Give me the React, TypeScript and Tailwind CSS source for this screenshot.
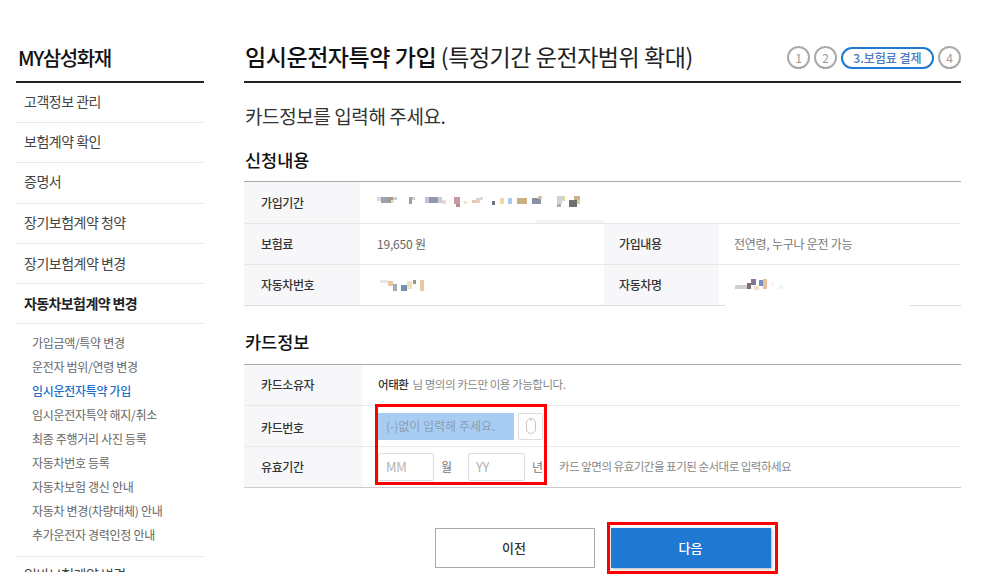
const font = { fontFamily: '"Noto Sans CJK KR", "Noto Sans", sans-serif' };

const mainMenu = ['고객정보 관리', '보험계약 확인', '증명서', '장기보험계약 청약', '장기보험계약 변경'];

const subMenu = [
  '가입금액/특약 변경',
  '운전자 범위/연령 변경',
  '임시운전자특약 가입',
  '임시운전자특약 해지/취소',
  '최종 주행거리 사진 등록',
  '자동차번호 등록',
  '자동차보험 갱신 안내',
  '자동차 변경(차량대체) 안내',
  '추가운전자 경력인정 안내',
];

function Sidebar() {
  return (
    <aside className="w-[188px] h-[572px] overflow-hidden shrink-0">
      <h2 className="h-[83px] pl-[2px] pt-[43px] border-b-2 border-[#222] text-[20px] leading-[30px] font-medium text-[#111] tracking-[-1.4px]">
        MY삼성화재
      </h2>
      <ul>
        {mainMenu.map((item, i) => (
          <li
            key={item}
            className={
              i === 4
                ? 'h-[40.2px] pl-2 border-b border-[#e8e8e8] text-[14px] leading-[39px] tracking-[-0.5px] text-[#444]'
                : 'h-[40.2px] pl-2 border-b border-[#e8e8e8] text-[14px] leading-[37px] tracking-[-0.5px] text-[#444]'
            }
          >
            {item}
          </li>
        ))}
        <li className="h-[40px] pl-2 border-b border-[#e8e8e8] text-[14px] leading-[39px] tracking-[-0.6px] font-bold text-[#222]">
          자동차보험계약 변경
        </li>
      </ul>
      <ul className="pt-[7px] pb-[9px] pl-4 border-b border-[#e8e8e8]">
        {subMenu.map((item, i) => (
          <li
            key={item}
            className={
              i === 2
                ? 'h-6 text-[12px] leading-6 tracking-[-0.3px] font-medium text-[#1f6fc9]'
                : 'h-6 text-[12px] leading-6 tracking-[-0.3px] text-[#666]'
            }
          >
            {item}
          </li>
        ))}
      </ul>
      <div className="pl-2 pt-[7px] text-[14px] leading-5 tracking-[-0.5px] text-[#444]">일반보험계약 변경</div>
    </aside>
  );
}

function Steps() {
  const circle =
    'w-[23px] h-[23px] rounded-full border-2 border-[#aaa] flex items-center justify-center text-[12px] text-[#999]';
  return (
    <div className="flex items-center gap-1">
      <span className={circle}>1</span>
      <span className={circle}>2</span>
      <span className="w-[93px] h-[22px] rounded-full border-2 border-[#1f78d1] flex items-center justify-center text-[12px] font-medium text-[#4a78c0]">
        3.보험료 결제
      </span>
      <span className={circle}>4</span>
    </div>
  );
}

type Block = [number, number, number, number, string];

// 가려진 개인정보 (모자이크)
function Mosaic({ blocks, w }: { blocks: Block[]; w: number }) {
  return (
    <svg width={w} height={13} className="block">
      {blocks.map(([x, y, bw, bh, c], i) => (
        <rect key={i} x={x} y={y} width={bw} height={bh} fill={c} />
      ))}
    </svg>
  );
}

const periodBlocks: Block[] = [
  [0, 2, 4, 4, '#d8d8e2'], [4, 2, 6, 6, '#9aa3b4'], [10, 2, 6, 6, '#a89a90'], [16, 2, 4, 3, '#c0d4dc'], [14, 5, 3, 3, '#ddd'],
  [32, 2, 3, 7, '#9aa0a8'], [35, 2, 3, 3, '#c8ccd0'], [48, 2, 4, 6, '#bcc8d8'], [52, 2, 9, 6, '#9098aa'], [61, 2, 4, 6, '#c8ccd4'], [65, 5, 4, 4, '#e8d8d0'],
  [77, 2, 6, 7, '#c89aa0'], [79, 9, 4, 3, '#c08890'], [87, 6, 3, 3, '#efe6da'], [95, 5, 4, 3, '#e8c8a8'], [99, 3, 4, 5, '#e0d0c8'], [103, 2, 3, 3, '#d8d8e0'],
  [115, 6, 3, 4, '#6a7488'], [123, 3, 4, 6, '#f0d8a0'], [131, 3, 4, 6, '#a8c8ec'], [140, 3, 10, 6, '#c8b080'],
  [155, 3, 9, 6, '#8a92a6'], [161, 1, 4, 3, '#d8c0a8'], [180, 1, 5, 8, '#ccd4e0'], [185, 1, 3, 5, '#d8d8a8'], [180, 9, 4, 3, '#a8acb4'],
  [192, 5, 8, 7, '#707070'], [197, 1, 6, 4, '#c8b090'], [200, 5, 3, 4, '#d8d0a0'],
];

const carNoBlocks: Block[] = [
  [0, 1, 8, 3, '#e4e8ec'], [8, 2, 5, 5, '#e8c8a0'], [13, 5, 4, 7, '#a0aeb8'], [21, 6, 6, 6, '#7890b0'],
  [27, 2, 5, 8, '#f0e0b8'], [33, 1, 3, 4, '#a09080'], [40, 1, 4, 11, '#e8c8a0'],
];

const carNameBlocks: Block[] = [
  [0, 6, 12, 4, '#d0d0d0'], [12, 4, 4, 6, '#807070'], [16, 0, 5, 6, '#887890'], [19, 7, 5, 4, '#f0e0c8'],
  [24, 1, 4, 6, '#7890c0'], [28, 0, 4, 10, '#e8c0a0'], [36, 3, 3, 4, '#f8f4e8'], [44, 6, 4, 4, '#e8f8f4'],
];

function Th({ children, className = '' }: { children: React.ReactNode; className?: string }) {
  return (
    <div className={`bg-[#f7f7f9] flex items-center text-[12px] font-medium tracking-[-0.4px] text-[#333] ${className}`}>
      {children}
    </div>
  );
}

function Main() {
  return (
    <main className="w-[717px] ml-10 shrink-0">
      <div className="h-[83px] border-b-2 border-[#222] flex items-end justify-between pb-[12px]">
        <h1 className="pl-px text-[23px] leading-[26px] tracking-[-0.45px] text-[#111] font-medium">
          임시운전자특약 가입 <span className="font-normal tracking-[-0.45px] text-[#222]">(특정기간 운전자범위 확대)</span>
        </h1>
        <Steps />
      </div>
      <p className="mt-[19px] pl-px text-[19px] leading-[27px] tracking-[-0.4px] text-[#333]">카드정보를 입력해 주세요.</p>
      <h3 className="mt-[18px] pl-px text-[17.5px] leading-[26px] font-medium text-[#111]">신청내용</h3>

      <section className="relative mt-[8px] border-t border-[#aaa]">
        <div className="absolute left-[292px] top-[38px] w-[68px] h-[3px] bg-[#f5f5f6]" />
        <div className="flex h-[42px] border-b border-[#e8e8e8]">
          <Th className="w-[116px] pl-[17px]">가입기간</Th>
          <div className="flex-1 pl-[17px] pb-[2px] flex items-center">
            <Mosaic blocks={periodBlocks} w={205} />
          </div>
        </div>
        <div className="flex h-[41px] border-b border-[#e8e8e8]">
          <Th className="w-[116px] pl-[17px]">보험료</Th>
          <div className="w-[244px] pl-[17px] flex items-center text-[12px] tracking-[-0.2px] text-[#666]">19,650 원</div>
          <Th className="w-[115px] pl-[15px]">가입내용</Th>
          <div className="flex-1 pl-[15px] flex items-center text-[12px] tracking-[-0.25px] text-[#777]">전연령, 누구나 운전 가능</div>
        </div>
        <div className="flex h-[40px]">
          <Th className="w-[116px] pl-[17px]">자동차번호</Th>
          <div className="w-[244px] pl-[20px] flex items-center">
            <Mosaic blocks={carNoBlocks} w={46} />
          </div>
          <Th className="w-[115px] pl-[15px]">자동차명</Th>
          <div className="flex-1 pl-4 flex items-center">
            <Mosaic blocks={carNameBlocks} w={50} />
          </div>
        </div>
        <div className="flex h-px">
          <div className="w-[481px] bg-[#ddd]" />
          <div className="w-[185px]" />
          <div className="flex-1 bg-[#ddd]" />
        </div>
      </section>

      <h3 className="mt-[23px] pl-px text-[17.5px] leading-[26px] font-medium text-[#111]">카드정보</h3>

      <section className="mt-[9px] border-t border-[#aaa]">
        <div className="flex h-[41px] border-b border-[#e8e8e8]">
          <Th className="w-[118px] pl-[17px]">카드소유자</Th>
          <div className="pl-[16px] flex items-center text-[11.5px] tracking-[-0.45px] text-[#888]">
            <b className="font-medium text-[#333] mr-1">어태환</b>님 명의의 카드만 이용 가능합니다.
          </div>
        </div>
        <div className="flex h-[41px] border-b border-[#e8e8e8]">
          <Th className="w-[118px] pl-[17px] pt-[3px]">카드번호</Th>
          <div className="pl-[16px] flex items-center gap-1">
            <div className="w-[136px] h-[27px] bg-[#a8cdf3] pl-2 flex items-center text-[12px] text-[#8a9db4]">
              (-)없이 입력해 주세요.
            </div>
            <div className="w-[25px] h-[27px] border border-[#ddd] rounded-[2px] flex items-center justify-center">
              <svg width="12" height="16" viewBox="0 0 12 16" fill="none" stroke="#c4c4c4">
                <rect x="1.5" y="0.5" width="9" height="15" rx="4.5" />
                <path d="M6 0.5v3" />
              </svg>
            </div>
          </div>
        </div>
        <div className="flex h-[41px] border-b border-[#ccc]">
          <Th className="w-[118px] pl-[17px] pb-[1px]">유효기간</Th>
          <div className="pl-[16px] flex items-center text-[12px] text-[#777]">
            <div className="w-[56px] h-[28px] border border-[#ddd] rounded-[2px] pl-[7px] flex items-center text-[13px] tracking-[-0.3px] text-[#b4b4b4]">MM</div>
            <span className="ml-[7px] w-[27px]">월</span>
            <div className="w-[57px] h-[28px] border border-[#ddd] rounded-[2px] pl-[7px] flex items-center text-[13px] tracking-[-0.3px] text-[#b4b4b4]">YY</div>
            <span className="ml-[7px]">년</span>
            <span className="ml-[16px] text-[#888] text-[11.5px] tracking-[-0.5px]">카드 앞면의 유효기간을 표기된 순서대로 입력하세요</span>
          </div>
        </div>
      </section>

      <div className="mt-[40px] flex justify-center gap-4 pl-px">
        <button className="w-40 h-10 pb-px pr-[2px] border border-[#aaa] text-[13px] font-medium text-[#333] bg-white">이전</button>
        <button className="w-40 h-10 pb-px pr-px bg-[#1f78d1] shadow-[1px_1px_3px_rgba(0,0,0,0.3)] text-[13px] font-medium text-white">다음</button>
      </div>
    </main>
  );
}

export default function App() {
  return (
    <div className="relative w-[995px] h-[588px] overflow-hidden bg-white pl-4 flex" style={font}>
      <Sidebar />
      <Main />
      {/* 캡처에 표시된 빨간 강조 박스 */}
      <div className="absolute left-[375px] top-[404px] w-[172px] h-[81px] border-[3px] border-[#f00]" />
      <div className="absolute left-[607px] top-[522px] w-[171px] h-[52px] border-[3px] border-[#f00]" />
    </div>
  );
}
